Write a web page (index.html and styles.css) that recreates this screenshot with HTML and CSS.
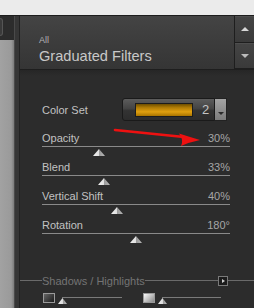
FILE: index.html
```html
<!DOCTYPE html>
<html>
<head>
<meta charset="utf-8">
<link rel="stylesheet" href="styles.css">
</head>
<body>
<div class="top"></div>
<div class="main">
  <div class="side">
    <div class="side-left">
      <div class="side-stub"><div class="stub-btn"></div></div>
      <div class="side-gray"></div>
    </div>
    <div class="side-strip"></div>
  </div>
  <div class="panel">
    <div class="header">
      <div class="title-wrap">
        <div class="all">All</div>
        <div class="title">Graduated Filters</div>
      </div>
      <div class="scroll">
        <div class="sbtn"><span class="arr-up"></span></div>
        <div class="sbtn"><span class="arr-down"></span></div>
      </div>
    </div>
    <div class="body">
      <div class="colorset">
        <div class="label cs-label">Color Set</div>
        <div class="cs-box">
          <div class="gold"></div>
          <div class="cs-num">2</div>
        </div>
        <div class="cs-drop"><span class="drop-arr"></span></div>
      </div>

      <div class="slider">
        <div class="sl-head"><span class="label">Opacity</span><span class="value">30%</span></div>
        <div class="sl-track"><span class="thumb" style="margin-left:51px"></span></div>
      </div>
      <div class="slider">
        <div class="sl-head"><span class="label">Blend</span><span class="value">33%</span></div>
        <div class="sl-track"><span class="thumb" style="margin-left:56px"></span></div>
      </div>
      <div class="slider">
        <div class="sl-head"><span class="label">Vertical Shift</span><span class="value">40%</span></div>
        <div class="sl-track"><span class="thumb" style="margin-left:69px"></span></div>
      </div>
      <div class="slider">
        <div class="sl-head"><span class="label">Rotation</span><span class="value">180°</span></div>
        <div class="sl-track"><span class="thumb" style="margin-left:88px"></span></div>
      </div>

      <div class="section">
        <span class="sec-line-l"></span>
        <span class="sec-text">Shadows / Highlights</span>
        <span class="sec-line"></span>
        <span class="sec-btn"><span class="sec-arr"></span></span>
        <span class="sec-line-r"></span>
      </div>

      <div class="tones">
        <div class="tone">
          <span class="swatch dark"></span>
          <span class="mini-track"><span class="mini-thumb"></span></span>
        </div>
        <div class="tone">
          <span class="swatch light"></span>
          <span class="mini-track"><span class="mini-thumb"></span></span>
        </div>
      </div>
    </div>
  </div>
</div>
<svg class="annot" width="254" height="308" viewBox="0 0 254 308">
  <path d="M115 130 L184 137" stroke="#ee1111" stroke-width="2.6" fill="none" stroke-linecap="round"/>
  <path d="M179 133.5 Q190 137 200 140 Q190 142 181 146 Q184 140 179 133.5 Z" fill="#ee1111"/>
</svg>
</body>
</html>
```
FILE: styles.css
```css
* { box-sizing: border-box; }
html, body { margin: 0; padding: 0; }
body {
  width: 254px;
  height: 308px;
  overflow: hidden;
  background: #ebebeb;
  font-family: "Liberation Sans", Arial, sans-serif;
  position: relative;
}
.top {
  height: 16px;
  background: #ebebeb;
  border-bottom: 1px solid #1d1d1d;
}
.main {
  display: flex;
  height: 292px;
}
.side {
  width: 20px;
  display: flex;
}
.side-left {
  width: 15px;
  display: flex;
  flex-direction: column;
  border-right: 1px solid #4a4a4a;
}
.side-stub {
  height: 24px;
  background: #2c2c2c;
  padding-top: 2px;
}
.stub-btn {
  width: 3px;
  height: 18px;
  border: 1px solid #555;
  border-left: none;
  border-radius: 0 3px 3px 0;
  background: #3a3a3a;
}
.side-gray {
  flex: 1;
  background: linear-gradient(90deg, #a2a2a2, #9a9a9a 80%, #7c7c7c);
}
.side-strip {
  flex: 1;
  background: #363636;
  border-right: 1px solid #222;
}
.panel {
  width: 234px;
  display: flex;
  flex-direction: column;
  background: #2c2c2c;
}
.header {
  height: 54px;
  display: flex;
  background: linear-gradient(#444, #3c3c3c 50%, #353535);
  border-bottom: 1px solid #1e1e1e;
}
.title-wrap {
  flex: 1;
  padding: 20px 0 0 19px;
}
.all {
  font-size: 9px;
  line-height: 9px;
  color: #b4b4b4;
}
.title {
  margin-top: 3px;
  font-size: 14.6px;
  line-height: 17px;
  color: #c8c8c8;
}
.scroll {
  width: 20px;
  display: flex;
  flex-direction: column;
  border-left: 1px solid #1e1e1e;
}
.sbtn {
  flex: 1;
  display: flex;
  align-items: center;
  justify-content: center;
  background: linear-gradient(#444, #3a3a3a);
  border-top: 1px solid #4e4e4e;
  border-bottom: 1px solid #1e1e1e;
}
.arr-up {
  width: 0; height: 0;
  border-left: 4px solid transparent;
  border-right: 4px solid transparent;
  border-bottom: 4px solid #d8d8d8;
}
.arr-down {
  width: 0; height: 0;
  border-left: 4px solid transparent;
  border-right: 4px solid transparent;
  border-top: 4px solid #bcbcbc;
}
.body {
  flex: 1;
  background: linear-gradient(#262626, #2c2c2c 6px);
  padding-top: 28px;
}
.label {
  font-size: 11px;
  color: #c2c2c2;
}
.value {
  font-size: 11px;
  color: #a6a6a6;
}
.colorset {
  display: flex;
  align-items: center;
  height: 23px;
  margin-left: 22px;
}
.cs-label { width: 80px; }
.cs-box {
  width: 93px;
  height: 23px;
  border: 1px solid #1a1a1a;
  border-radius: 3px 0 0 3px;
  background: linear-gradient(#5c5c5c, #444 45%, #333 55%, #2c2c2c);
  display: flex;
  align-items: center;
}
.gold {
  margin-left: 12px;
  width: 58px;
  height: 14px;
  border: 1px solid #1c1c1c;
  background: linear-gradient(#6e4e00, #b07c06 30%, #e0a010 65%, #a87400 100%);
}
.cs-num {
  margin-left: 9px;
  font-size: 13px;
  color: #c4c4c4;
}
.cs-drop {
  width: 12px;
  height: 23px;
  background: linear-gradient(#a4a4a4, #7c7c7c);
  border: 1px solid #222;
  border-left: none;
  display: flex;
  align-items: flex-end;
  justify-content: center;
  padding-bottom: 5px;
}
.drop-arr {
  width: 0; height: 0;
  border-left: 3px solid transparent;
  border-right: 3px solid transparent;
  border-top: 3px solid #2a2a2a;
}
.slider {
  height: 29px;
  margin: 0 24px 0 22px;
}
.colorset + .slider { margin-top: 8px; }
.sl-head {
  height: 18px;
  display: flex;
  justify-content: space-between;
  align-items: center;
  border-bottom: 1px solid #8a8a8a;
  padding-top: 1px;
}
.sl-track {
  height: 11px;
  padding-top: 2px;
}
.thumb {
  display: block;
  width: 12px;
  height: 7px;
  clip-path: polygon(50% 0, 100% 100%, 0 100%);
  background: linear-gradient(90deg, #f0f0f0 0, #e0e0e0 50%, #9a9a9a 52%, #b8b8b8 100%);
}
.section {
  margin-top: 29px;
  height: 13px;
  display: flex;
  align-items: center;
}
.sec-line-l { width: 22px; height: 1px; background: #6a6a6a; }
.sec-line { flex: 1; height: 1px; background: #6a6a6a; }
.sec-line-r { width: 26px; height: 1px; background: #6a6a6a; }
.sec-text {
  font-size: 11px;
  color: #747474;
}
.sec-btn {
  width: 10px;
  height: 10px;
  border: 1px solid #7a7a7a;
  background: #1c1c1c;
  display: flex;
  align-items: center;
  justify-content: center;
}
.sec-arr {
  width: 0; height: 0;
  border-top: 2.5px solid transparent;
  border-bottom: 2.5px solid transparent;
  border-left: 3px solid #cfcfcf;
}
.tones {
  display: flex;
  margin-top: 5px;
  padding-left: 23px;
  gap: 21px;
}
.tone {
  display: flex;
  align-items: flex-start;
}
.swatch {
  display: block;
  width: 12px;
  height: 10px;
  margin-top: 1px;
  border: 1px solid #9a9a9a;
}
.swatch.dark { background: linear-gradient(135deg, #666, #1a1a1a); }
.swatch.light { background: linear-gradient(135deg, #fafafa, #888); }
.mini-track {
  display: block;
  position: relative;
  width: 65px;
  height: 12px;
  margin-left: 2px;
}
.mini-track::before {
  content: "";
  position: absolute;
  left: 5px;
  right: 0;
  top: 5px;
  height: 1px;
  background: #7a7a7a;
}
.mini-thumb {
  position: absolute;
  left: 1px;
  top: 6px;
  width: 9px;
  height: 6px;
  clip-path: polygon(50% 0, 100% 100%, 0 100%);
  background: linear-gradient(90deg, #eee, #ddd 50%, #999 52%, #bbb);
}
.tone + .tone .mini-track { width: 64px; }
.annot {
  position: absolute;
  left: 0;
  top: 0;
  pointer-events: none;
}
```
